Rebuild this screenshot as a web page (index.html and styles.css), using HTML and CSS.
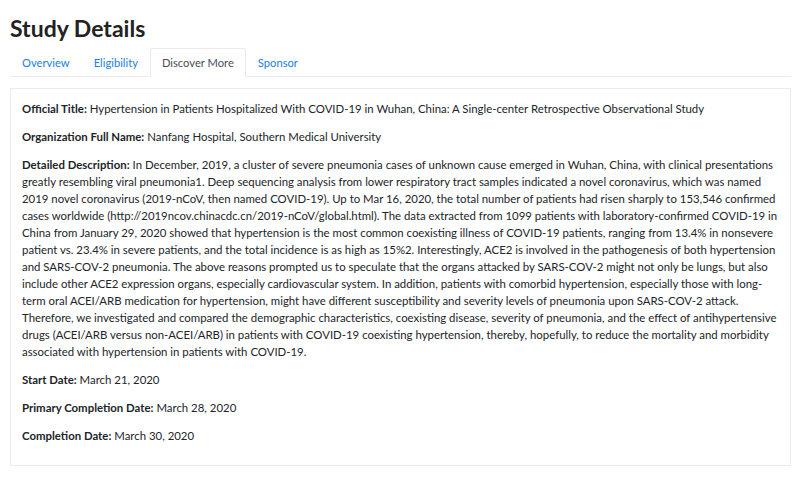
FILE: index.html
```html
<!DOCTYPE html>
<html>
<head>
<meta charset="utf-8">
<link rel="stylesheet" href="styles.css">
</head>
<body>
<div class="page">
  <h2 class="title">Study Details</h2>
  <ul class="tabs">
    <li class="tab"><a>Overview</a></li>
    <li class="tab"><a>Eligibility</a></li>
    <li class="tab active"><a>Discover More</a></li>
    <li class="tab"><a>Sponsor</a></li>
  </ul>
  <div class="card">
    <p><b>Official Title:</b> Hypertension in Patients Hospitalized With COVID-19 in Wuhan, China: A Single-center Retrospective Observational Study</p>
    <p><b>Organization Full Name:</b> Nanfang Hospital, Southern Medical University</p>
    <p><b>Detailed Description:</b> In December, 2019, a cluster of severe pneumonia cases of unknown cause emerged in Wuhan, China, with clinical presentations greatly resembling viral pneumonia1. Deep sequencing analysis from lower respiratory tract samples indicated a novel coronavirus, which was named 2019 novel coronavirus (2019-nCoV, then named COVID-19). Up to Mar 16, 2020, the total number of patients had risen sharply to 153,546 confirmed cases worldwide (http://2019ncov.chinacdc.cn/2019-nCoV/global.html). The data extracted from 1099 patients with laboratory-confirmed COVID-19 in China from January 29, 2020 showed that hypertension is the most common coexisting illness of COVID-19 patients, ranging from 13.4% in nonsevere patient vs. 23.4% in severe patients, and the total incidence is as high as 15%2. Interestingly, ACE2 is involved in the pathogenesis of both hypertension and SARS-COV-2 pneumonia. The above reasons prompted us to speculate that the organs attacked by SARS-COV-2 might not only be lungs, but also include other ACE2 expression organs, especially cardiovascular system. In addition, patients with comorbid hypertension, especially those with long-term oral ACEI/ARB medication for hypertension, might have different susceptibility and severity levels of pneumonia upon SARS-COV-2 attack. Therefore, we investigated and compared the demographic characteristics, coexisting disease, severity of pneumonia, and the effect of antihypertensive drugs (ACEI/ARB versus non-ACEI/ARB) in patients with COVID-19 coexisting hypertension, thereby, hopefully, to reduce the mortality and morbidity associated with hypertension in patients with COVID-19.</p>
    <p><b>Start Date:</b> March 21, 2020</p>
    <p><b>Primary Completion Date:</b> March 28, 2020</p>
    <p><b>Completion Date:</b> March 30, 2020</p>
  </div>
</div>
</body>
</html>
```
FILE: styles.css
```css
html, body {
  margin: 0;
  padding: 0;
  background: #fff;
}
body {
  font-family: "Lato", "Noto Sans", sans-serif;
  color: #212529;
  font-size: 11.4px;
  line-height: 17px;
}
.page {
  padding: 14px 15px 0 10px;
}
.title {
  margin: 0 0 6px 0;
  font-size: 23px;
  line-height: 28px;
  font-weight: 700;
  color: #222;
}
.tabs {
  list-style: none;
  margin: 0;
  padding: 0;
  display: flex;
  border-bottom: 1px solid #e9ecef;
}
.tab {
  margin-bottom: -1px;
}
.tab a {
  display: block;
  padding: 5px 11px 4px;
  border: 1px solid transparent;
  border-radius: 3px 3px 0 0;
  color: #1a7fe8;
  font-size: 11.2px;
  line-height: 18px;
}
.tab.active a {
  color: #495057;
  background: #fff;
  border-color: #e9ecef #e9ecef #fff;
}
.card {
  margin-top: 11px;
  border: 1px solid #e9ecef;
  padding: 11px 11px 12px;
}
.card p {
  margin: 0 0 11px 0;
}
.card p:last-child {
  margin-bottom: 9px;
}
b {
  font-weight: 700;
}
```
